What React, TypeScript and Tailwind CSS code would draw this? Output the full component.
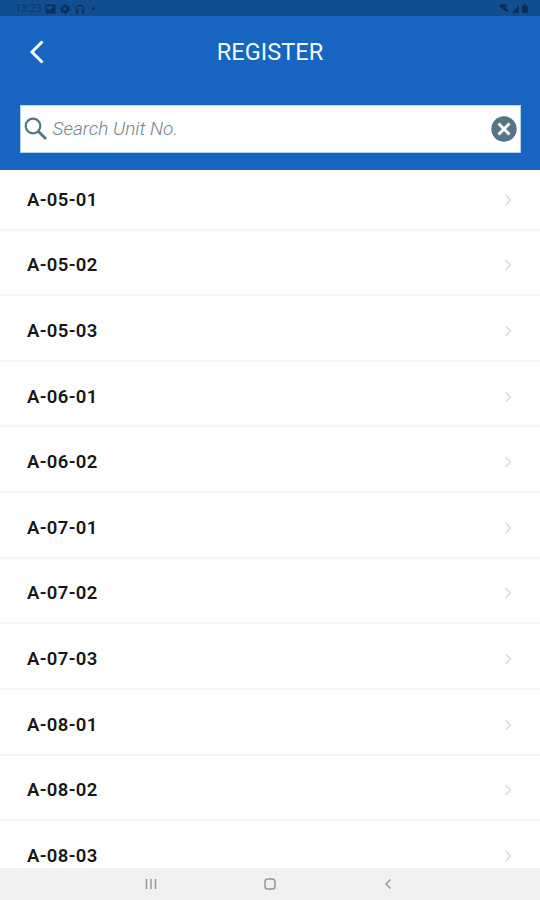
import React from "react";

const units = [
  "A-05-01",
  "A-05-02",
  "A-05-03",
  "A-06-01",
  "A-06-02",
  "A-07-01",
  "A-07-02",
  "A-07-03",
  "A-08-01",
  "A-08-02",
  "A-08-03",
];

const StatusBar = () => {
  return (
    <div className="flex h-4 shrink-0 items-center justify-between bg-[#104e90] pl-[15px] pr-3 text-[#0b2f5b]">
      <div className="flex items-center pt-px">
        <span className="w-[30px] text-[11px] leading-[15px] tracking-[-0.2px] opacity-70">13:23</span>
        <svg className="h-[10px] w-[11px]" viewBox="0 0 11 10">
          <path fill="currentColor" fillRule="evenodd" d="M1.5 0.5h8a1 1 0 0 1 1 1v7a1 1 0 0 1-1 1h-8a1 1 0 0 1-1-1v-7a1 1 0 0 1 1-1zM2 2v3l2 1 2-1 3-3z" />
        </svg>
        <svg className="ml-1 h-[10px] w-[10px]" viewBox="0 0 10 10">
          <circle cx="5" cy="5" r="2.7" fill="none" stroke="currentColor" strokeWidth="2" />
          <circle cx="5" cy="5" r="4" fill="none" stroke="currentColor" strokeWidth="1.6" strokeDasharray="2.2 1.99" />
        </svg>
        <svg className="ml-[5px] h-[10px] w-[10px]" viewBox="0 0 10 10">
          <path fill="none" stroke="currentColor" strokeWidth="1.2" d="M1.3 8V5a3.7 3.7 0 0 1 7.4 0v3" />
          <path fill="currentColor" d="M1 5.5h2.3v4H1zM6.7 5.5H9v4H6.7z" />
        </svg>
        <span className="ml-[7px] size-[2.5px] rounded-full bg-current" />
      </div>
      <div className="flex items-center">
        <svg className="h-[10px] w-[11px]" viewBox="0 0 11 10">
          <path fill="currentColor" d="M0.5 2.5Q5 -0.5 9.5 2.5L7.5 5l3 2.5-1.5 1L5.5 7z" />
        </svg>
        <svg className="ml-[3px] h-[9px] w-[7px]" viewBox="0 0 7 9">
          <path fill="currentColor" d="M7 1v8H0z" />
        </svg>
        <svg className="ml-[3px] h-[9px] w-[6px]" viewBox="0 0 6 9">
          <path fill="currentColor" d="M1.5 0h2v1.5H6V9H0V1.5h1.5z" />
        </svg>
      </div>
    </div>
  );
};

const Header = () => {
  return (
    <div className="h-[153.5px] shrink-0 bg-[#1765c1] pl-5 pr-[19px]">
      <div className="grid h-[72px] grid-cols-[40px_1fr_41px] items-center">
        <svg className="ml-[9px] h-6 w-4" viewBox="0 0 16 24">
          <path fill="none" stroke="white" strokeWidth="3" d="M13.5 1.5L3 12l10.5 10.5" />
        </svg>
        <h1 className="text-center text-[23.5px] leading-8 tracking-[0.05px] text-[#f3f8ff]">REGISTER</h1>
      </div>
      <div className="mt-[17px] flex h-12 items-center border border-[#b5d0f0] bg-white px-[3px]">
        <svg className="-mt-px size-[23px]" viewBox="0 0 23 23">
          <circle cx="9" cy="9" r="7.3" fill="none" stroke="#527484" strokeWidth="2.2" />
          <path stroke="#527484" strokeWidth="2.8" d="M14 14l8 8" />
        </svg>
        <span className="ml-[5.5px] flex-1 text-[19px] font-light italic leading-6 text-[#71838b]">Search Unit No.</span>
        <svg className="size-[26px]" viewBox="0 0 26 26">
          <circle cx="13" cy="13" r="12.7" fill="#557584" />
          <path stroke="white" strokeWidth="3" d="M7.5 7.5l11 11M18.5 7.5l-11 11" />
        </svg>
      </div>
    </div>
  );
};

const UnitRow = ({ unit }: { unit: string }) => {
  return (
    <div className="flex h-[65.63px] shrink-0 items-center justify-between border-b-2 border-[#f5f5f5] pl-[27px] pr-7 pt-[6px]">
      <span className="text-[18.5px] font-semibold leading-6 tracking-[0.35px] text-[#171717]">{unit}</span>
      <svg className="h-3 w-2" viewBox="0 0 8 12">
        <path fill="none" stroke="#dadada" strokeWidth="1.4" d="M1.5 1l5 5-5 5" />
      </svg>
    </div>
  );
};

const NavBar = () => {
  return (
    <div className="grid h-8 shrink-0 grid-cols-[119px_118px_119px] items-center justify-items-center bg-[#f0f0f0] pl-[91.5px] text-[#969696]">
      <svg className="h-3 w-3" viewBox="0 0 12 12">
        <path stroke="currentColor" strokeWidth="1.5" d="M1.5 1v10M6 1v10M10.5 1v10" />
      </svg>
      <svg className="h-3 w-3" viewBox="0 0 12 12">
        <rect x="1" y="1" width="10" height="10" rx="2.8" fill="none" stroke="currentColor" strokeWidth="1.5" />
      </svg>
      <svg className="h-3 w-3" viewBox="0 0 12 12">
        <path fill="none" stroke="currentColor" strokeWidth="1.4" d="M8.5 1.5L4 6l4.5 4.5" />
      </svg>
    </div>
  );
};

const App = () => {
  return (
    <div className="flex h-[900px] w-[540px] flex-col overflow-hidden bg-white font-[Roboto,sans-serif]">
      <StatusBar />
      <Header />
      {/* the list is scrolled a few pixels under the header */}
      <div className="min-h-0 flex-1 overflow-hidden">
        <div className="mt-[-4.6px] flex flex-col">
          {units.map((unit) => (
            <UnitRow key={unit} unit={unit} />
          ))}
        </div>
      </div>
      <NavBar />
    </div>
  );
};

export default App;
